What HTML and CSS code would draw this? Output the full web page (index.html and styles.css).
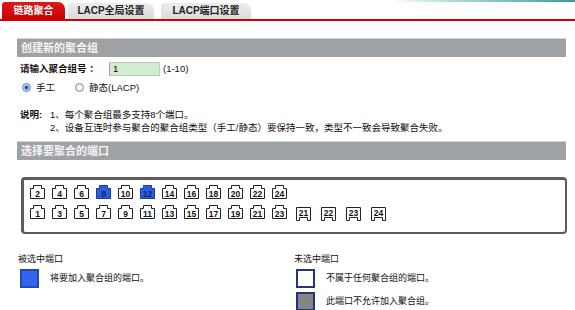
FILE: index.html
```html
<!DOCTYPE html>
<html lang="zh-CN">
<head>
    <meta charset="UTF-8">
    <title>链路聚合</title>
    <link rel="stylesheet" href="styles.css">
</head>
<body>
<svg class="defs" width="0" height="0">
    <symbol id="rj" viewBox="0 0 15 14"><polygon points="0.5,3.5 3.5,3.5 3.5,0.5 11.5,0.5 11.5,3.5 14.5,3.5 14.5,13.5 0.5,13.5"/></symbol>
    <symbol id="sfp" viewBox="0 0 15 14"><polygon points="0.5,0.5 14.5,0.5 14.5,13.5 11.5,13.5 11.5,10.5 3.5,10.5 3.5,13.5 0.5,13.5"/></symbol>
</svg>
<div class="topline"></div>
<div class="tabs">
    <a class="tab active">链路聚合</a>
    <a class="tab second">LACP全局设置</a>
    <a class="tab third">LACP端口设置</a>
</div>

<div class="content">
    <div class="bar">创建新的聚合组</div>
    <div class="field">
        <label class="label">请输入聚合组号 ：</label>
        <span class="input">1</span>
        <span class="range">(1-10)</span>
    </div>
    <div class="radios">
        <label class="radio manual"><input type="radio" name="mode" checked><span>手工</span></label>
        <label class="radio"><input type="radio" name="mode"><span>静态(LACP)</span></label>
    </div>
    <div class="note">
        <b class="note-title">说明:</b>
        <div>
            <p>1、每个聚合组最多支持8个端口。</p>
            <p>2、设备互连时参与聚合的聚合组类型（手工/静态）要保持一致，类型不一致会导致聚合失败。</p>
        </div>
    </div>

    <div class="bar">选择要聚合的端口</div>
    <div class="panel">
        <div class="ports">
            <svg class="port"><use href="#rj"/><text x="7.5" y="12">2</text></svg>
            <svg class="port"><use href="#rj"/><text x="7.5" y="12">4</text></svg>
            <svg class="port"><use href="#rj"/><text x="7.5" y="12">6</text></svg>
            <svg class="port on"><use href="#rj"/><text x="7.5" y="12">8</text></svg>
            <svg class="port"><use href="#rj"/><text x="7.5" y="12">10</text></svg>
            <svg class="port on"><use href="#rj"/><text x="7.5" y="12">12</text></svg>
            <svg class="port"><use href="#rj"/><text x="7.5" y="12">14</text></svg>
            <svg class="port"><use href="#rj"/><text x="7.5" y="12">16</text></svg>
            <svg class="port"><use href="#rj"/><text x="7.5" y="12">18</text></svg>
            <svg class="port"><use href="#rj"/><text x="7.5" y="12">20</text></svg>
            <svg class="port"><use href="#rj"/><text x="7.5" y="12">22</text></svg>
            <svg class="port"><use href="#rj"/><text x="7.5" y="12">24</text></svg>
            <svg class="port"><use href="#rj"/><text x="7.5" y="12">1</text></svg>
            <svg class="port"><use href="#rj"/><text x="7.5" y="12">3</text></svg>
            <svg class="port"><use href="#rj"/><text x="7.5" y="12">5</text></svg>
            <svg class="port"><use href="#rj"/><text x="7.5" y="12">7</text></svg>
            <svg class="port"><use href="#rj"/><text x="7.5" y="12">9</text></svg>
            <svg class="port"><use href="#rj"/><text x="7.5" y="12">11</text></svg>
            <svg class="port"><use href="#rj"/><text x="7.5" y="12">13</text></svg>
            <svg class="port"><use href="#rj"/><text x="7.5" y="12">15</text></svg>
            <svg class="port"><use href="#rj"/><text x="7.5" y="12">17</text></svg>
            <svg class="port"><use href="#rj"/><text x="7.5" y="12">19</text></svg>
            <svg class="port"><use href="#rj"/><text x="7.5" y="12">21</text></svg>
            <svg class="port"><use href="#rj"/><text x="7.5" y="12">23</text></svg>
        </div>
        <div class="combo">
            <svg class="port"><use href="#sfp"/><text x="7.5" y="9">21</text></svg>
            <svg class="port"><use href="#sfp"/><text x="7.5" y="9">22</text></svg>
            <svg class="port"><use href="#sfp"/><text x="7.5" y="9">23</text></svg>
            <svg class="port"><use href="#sfp"/><text x="7.5" y="9">24</text></svg>
        </div>
    </div>

    <div class="legend">
        <div class="legend-col left">
            <div class="legend-title">被选中端口</div>
            <div class="legend-row"><span class="swatch blue"></span>将要加入聚合组的端口。</div>
        </div>
        <div class="legend-col">
            <div class="legend-title">未选中端口</div>
            <div class="legend-row"><span class="swatch white"></span>不属于任何聚合组的端口。</div>
            <div class="legend-row"><span class="swatch gray"></span>此端口不允许加入聚合组。</div>
        </div>
    </div>
</div>
</body>
</html>
```

FILE: styles.css
```css
body{
    margin: 0;
    background-color: #fff;
    color: #111;
    font-family: "Liberation Sans", "Noto Sans CJK SC", sans-serif;
    font-size: 9.5px;
    line-height: 13px;
}
p{
    margin: 0;
}
.defs{
    position: absolute;
}
.topline{
    height: 2px;
    background: linear-gradient(to right, #fff 0, #fff 390px, #bfe0e0 440px, #3a9aa4 100%);
}

/* tabs */
.tabs{
    display: flex;
    align-items: flex-end;
    height: 17px;
    padding-left: 2px;
    border-bottom: 2px solid #d00000;
}
.tab{
    display: block;
    height: 16px;
    line-height: 16px;
    text-align: center;
    font-weight: bold;
    font-size: 10px;
    color: #222;
    background: linear-gradient(#ececec, #dcdcdc);
    border-radius: 3px 7px 0 0;
}
.tab.active{
    width: 63px;
    height: 17px;
    line-height: 17px;
    color: #fff;
    background: linear-gradient(#e01818, #c80000);
}
.tab.second{
    width: 86px;
    margin-left: 3px;
}
.tab.third{
    width: 90px;
    margin-left: 7px;
}

/* content */
.content{
    padding: 17px 9px 0 17px;
}
.bar{
    height: 18px;
    line-height: 18px;
    padding-left: 4px;
    border-top: 1px solid #cfd1d2;
    background-color: #9fa2a4;
    color: #f4f4f4;
    font-weight: bold;
    font-size: 11px;
}
.field{
    display: flex;
    align-items: center;
    height: 15px;
    margin-top: 4px;
    padding-left: 3px;
}
.label{
    width: 89px;
    font-weight: bold;
}
.input{
    box-sizing: border-box;
    width: 51px;
    height: 14px;
    line-height: 12px;
    padding-left: 3px;
    background-color: #d3ebd3;
    border: 1px solid #b7cfb7;
    border-left-color: #9aa;
    color: #000;
}
.range{
    margin-left: 3px;
}
.radios{
    display: flex;
    align-items: center;
    height: 14px;
    margin-top: 4px;
    padding-left: 5px;
}
.radio{
    display: flex;
    align-items: center;
}
.radio.manual{
    margin-right: 20px;
}
.radio input{
    appearance: none;
    box-sizing: border-box;
    width: 9px;
    height: 9px;
    margin: 0 3px 0 0;
    border: 1px solid #8b8b8b;
    border-radius: 50%;
    background: radial-gradient(#fff, #dcdcdc);
}
.radio input:checked{
    border-color: #5a7fb0;
    background: radial-gradient(#1f4fa8 0, #2f63c0 1.5px, #bcd3f0 2.5px, #e8f0fb 4px);
}
.radio input + span{
    margin-left: 2px;
}
.note{
    display: flex;
    margin-top: 14px;
    padding-left: 3px;
}
.note-title{
    width: 30px;
}
.note + .bar{
    margin-top: 7px;
}

/* ports */
.panel{
    box-sizing: border-box;
    display: flex;
    align-items: flex-start;
    width: 546px;
    height: 57px;
    margin: 17px 0 0 4px;
    padding: 5px 0 0 6px;
    border: 2px solid #5c5c5c;
    border-top-width: 3px;
    border-left-width: 3px;
    border-radius: 4px;
}
.ports{
    display: grid;
    grid-template-columns: repeat(12, 15px);
    gap: 6px 7px;
}
.port{
    display: block;
    width: 15px;
    height: 14px;
    fill: #fff;
    stroke: #222;
}
.port text{
    stroke: none;
    fill: #111;
    font-family: "Liberation Sans", sans-serif;
    font-weight: bold;
    font-size: 8.5px;
    text-anchor: middle;
}
.port.on{
    fill: #2d5ee2;
    stroke: #1b3a9a;
}
.port.on text{
    fill: #14245a;
}
.combo{
    display: flex;
    gap: 10px;
    margin: 22px 0 0 9px;
}

/* legend */
.legend{
    display: flex;
    margin-top: 19px;
    padding-left: 1px;
    font-size: 9px;
}
.legend-col.left{
    width: 276px;
}
.legend-title{
    height: 12px;
    line-height: 12px;
}
.legend-row{
    display: flex;
    align-items: center;
    height: 19px;
    margin-top: 4px;
}
.swatch{
    box-sizing: border-box;
    width: 19px;
    height: 19px;
    margin: 0 11px 0 2px;
    border: 2px solid #22357a;
}
.swatch.blue{
    background-color: #3264ef;
    border-color: #2548b0;
}
.swatch.white{
    background-color: #fff;
}
.swatch.gray{
    background-color: #858585;
}
```
